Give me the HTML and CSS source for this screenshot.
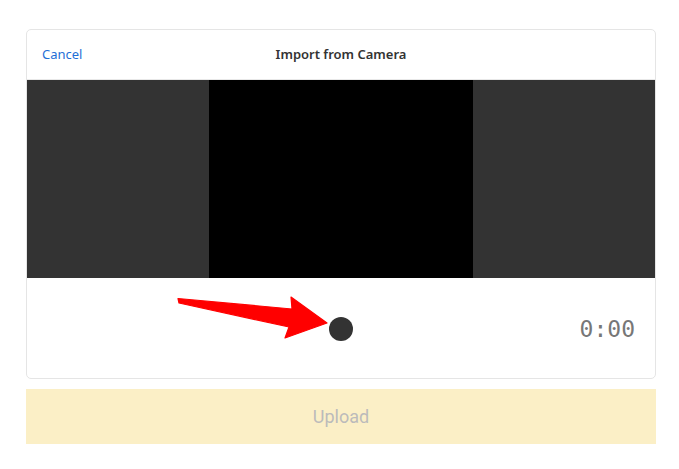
FILE: index.html
```html
<!DOCTYPE html>
<html lang="en">
<head>
<meta charset="utf-8">
<title>Import from Camera</title>
<link rel="stylesheet" href="styles.css">
</head>
<body>
<div class="page">
  <div class="card">
    <div class="header">
      <a class="cancel" href="#">Cancel</a>
      <div class="title">Import from Camera</div>
      <div class="spacer"></div>
    </div>
    <div class="video">
      <div class="feed"></div>
    </div>
    <div class="controls">
      <div class="side"></div>
      <button class="record" aria-label="Record"></button>
      <div class="side timer">0:00</div>
    </div>
  </div>
  <button class="upload">Upload</button>
</div>
<svg class="arrow" width="679" height="469" viewBox="0 0 679 469">
  <polygon points="178,298.5 292,309 291,297 327,323 285,338 289,327 179,303" fill="#ff0000" stroke="#ff0000" stroke-width="1.2" stroke-linejoin="round"/>
</svg>
</body>
</html>
```

FILE: styles.css
```css
html, body {
  margin: 0;
  padding: 0;
  background: #ffffff;
}
body {
  position: relative;
  width: 679px;
  height: 469px;
  overflow: hidden;
}
.page {
  padding: 29px 23px 0 26px;
  display: flex;
  flex-direction: column;
  gap: 10px;
}
.card {
  width: 630px;
  box-sizing: border-box;
  border: 1px solid #e5e5e5;
  border-radius: 5px;
  overflow: hidden;
  display: flex;
  flex-direction: column;
}
.header {
  height: 50px;
  box-sizing: border-box;
  border-bottom: 1px solid #e8e8e8;
  display: flex;
  align-items: center;
  padding: 0 15px 2px 15px;
  font-family: "Noto Sans", "Open Sans", sans-serif;
  font-size: 13px;
}
.cancel {
  color: #1f6fd6;
  text-decoration: none;
  width: 80px;
}
.title {
  flex: 1;
  text-align: center;
  color: #333333;
  font-weight: 600;
}
.spacer {
  width: 80px;
}
.video {
  height: 198px;
  background: #333333;
  display: flex;
  justify-content: center;
}
.feed {
  width: 264px;
  background: #000000;
}
.controls {
  height: 100px;
  display: flex;
  align-items: center;
  padding: 0 20px 0 20px;
}
.side {
  flex: 1;
}
.record {
  width: 24px;
  height: 24px;
  border-radius: 50%;
  border: none;
  padding: 0;
  background: #333333;
  margin-top: 2px;
}
.timer {
  text-align: right;
  font-family: "DejaVu Sans Mono", monospace;
  font-size: 23px;
  color: #777777;
  margin-top: 2px;
}
.upload {
  width: 630px;
  height: 55px;
  border: none;
  background: #fbefc6;
  color: #bbbbbb;
  font-family: Roboto, "Liberation Sans", sans-serif;
  font-size: 18px;
  padding: 0;
}
.arrow {
  position: absolute;
  left: 0;
  top: 0;
  pointer-events: none;
}
```
